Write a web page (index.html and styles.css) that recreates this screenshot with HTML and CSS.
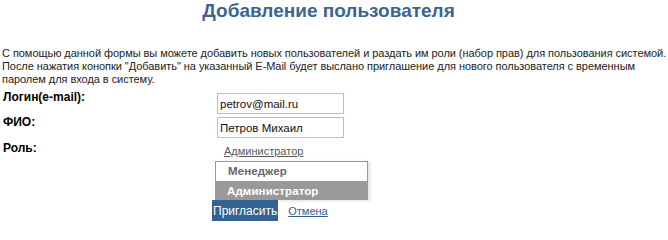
FILE: index.html
```html
<!DOCTYPE html>
<html lang="ru">
<head>
<meta charset="utf-8">
<title>Добавление пользователя</title>
<link rel="stylesheet" href="styles.css">
</head>
<body>
<div class="page">
  <h1 class="title">Добавление пользователя</h1>
  <p class="intro">С помощью данной формы вы можете добавить новых пользователей и раздать им роли (набор прав) для пользования системой.<br>После нажатия конопки "Добавить" на указанный E-Mail будет выслано приглашение для нового пользователя с временным<br>паролем для входа в систему.</p>
  <form class="form">
    <div class="row row-login">
      <label class="label">Логин(e-mail):</label>
      <div class="value"><input class="field" type="text" value="petrov@mail.ru"></div>
    </div>
    <div class="row row-fio">
      <label class="label">ФИО:</label>
      <div class="value"><input class="field" type="text" value="Петров Михаил"></div>
    </div>
    <div class="row row-role">
      <label class="label">Роль:</label>
      <div class="value">
        <a class="role-link" href="#">Администратор</a>
        <div class="dropdown">
          <div class="opt">Менеджер</div>
          <div class="opt opt-selected">Администратор</div>
        </div>
      </div>
    </div>
    <div class="actions">
      <button class="btn" type="button">Пригласить</button>
      <a class="cancel" href="#">Отмена</a>
    </div>
  </form>
</div>
</body>
</html>
```

FILE: styles.css
```css
html, body {
  margin: 0;
  padding: 0;
  background: #fff;
}
body {
  font-family: "Liberation Sans", Arial, sans-serif;
  font-size: 12px;
  color: #111;
}
.page {
  width: 668px;
  height: 228px;
  overflow: hidden;
  position: relative;
}
.title {
  margin: 0;
  font-size: 19px;
  line-height: 22px;
  font-weight: bold;
  color: #3b6591;
  text-align: center;
  padding-right: 11px;
}
.intro {
  margin: 25px 0 0 0;
  padding-left: 2px;
  font-size: 11px;
  letter-spacing: -0.05px;
  line-height: 13px;
  color: #222;
  white-space: nowrap;
}
.form {
  margin: 3px 0 0 0;
  padding-left: 3px;
}
.row {
  display: flex;
  align-items: flex-start;
}
.row-login { height: 25px; }
.row-fio { height: 26px; }
.row-role { height: 60px; }
.label {
  width: 209px;
  flex: none;
  font-weight: bold;
  line-height: 13px;
  color: #000;
  padding-top: 2px;
}
.value {
  display: flex;
  flex-direction: column;
  align-items: flex-start;
}
.field {
  box-sizing: border-box;
  width: 127px;
  height: 21px;
  margin: 4px 0 0 5px;
  padding: 0 2px;
  border: 1px solid #b4c0cf;
  font-family: "Liberation Sans", Arial, sans-serif;
  font-size: 11.5px;
  color: #111;
  outline: none;
}
.row-fio .field { margin-top: 3px; }
.role-link {
  margin: 5px 0 0 12px;
  line-height: 13px;
  font-size: 11px;
  color: #5a5a5a;
  text-decoration: underline;
}
.dropdown {
  margin: 3px 0 0 3px;
  width: 153px;
  box-shadow: 2px 1px 3px rgba(0, 0, 0, 0.12);
}
.opt {
  box-sizing: border-box;
  height: 18px;
  line-height: 18px;
  padding-left: 12px;
  font-weight: bold;
  font-size: 11.5px;
  letter-spacing: 0.1px;
  color: #666;
}
.dropdown .opt:first-child {
  height: 21px;
  line-height: 19px;
  border: 1px solid #999;
  background: #fff;
}
.opt-selected {
  background: #999;
  color: #fff;
}
.actions {
  display: flex;
  align-items: center;
  margin-left: 209px;
  height: 21px;
}
.btn {
  height: 21px;
  padding: 0 1px;
  border: none;
  background: #336392;
  color: #fff;
  font-family: "Liberation Sans", Arial, sans-serif;
  font-size: 12px;
  cursor: pointer;
}
.cancel {
  margin-left: 10px;
  font-size: 11px;
  color: #2f5f8f;
  text-decoration: underline;
}
```
